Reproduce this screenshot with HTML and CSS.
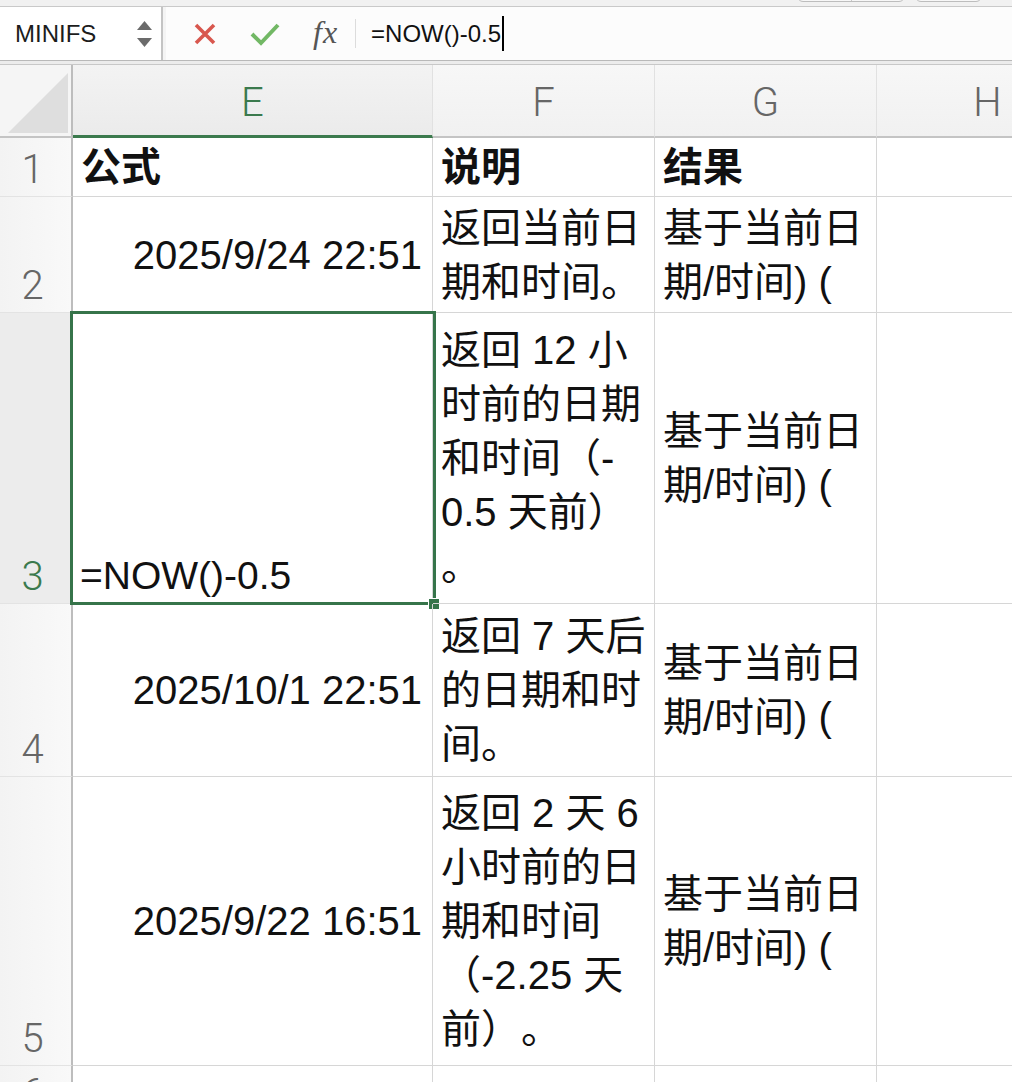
FILE: index.html
```html
<!DOCTYPE html>
<html lang="zh-CN">
<head>
<meta charset="utf-8">
<title>NOW</title>
<link rel="stylesheet" href="styles.css">
</head>
<body>
<div class="app">
  <div class="topstrip">
    <div class="tbtn tbtn-split"><span class="tbtn-half"></span><span class="tbtn-half"></span></div>
    <div class="tbtn tbtn-single"></div>
  </div>
  <div class="fbar">
    <div class="namebox">
      <span class="namebox-text">MINIFS</span>
      <div class="spin">
        <svg width="15" height="26" viewBox="0 0 15 26"><polygon points="7.5,0 15,9 0,9" fill="#6b6b6b"/><polygon points="0,17 15,17 7.5,26" fill="#6b6b6b"/></svg>
      </div>
    </div>
    <div class="fgap"></div>
    <div class="formula">
      <svg class="ficon ficon-x" width="24" height="24" viewBox="0 0 24 24"><path d="M3 3 L21 21 M21 3 L3 21" stroke="#d8574e" stroke-width="3.6" stroke-linecap="butt" fill="none"/></svg>
      <svg class="ficon ficon-ok" width="30" height="24" viewBox="0 0 30 24"><path d="M2 12 L11 21 L28 3" stroke="#72b865" stroke-width="4" fill="none"/></svg>
      <span class="fx">fx</span>
      <span class="fsep"></span>
      <span class="ftext">=NOW()-0.5</span><span class="caret"></span>
    </div>
  </div>
  <div class="fbar-bottom"></div>
  <div class="sheet">
    <div class="corner"><svg width="73" height="73" viewBox="0 0 73 73"><polygon points="8,68 68,8 68,68" fill="#dedede"/></svg></div>
    <div class="colhead colhead-active">E</div>
    <div class="colhead">F</div>
    <div class="colhead">G</div>
    <div class="colhead">H</div>

    <div class="rowhead">1</div>
    <div class="cell cell-bold">公式</div>
    <div class="cell cell-bold">说明</div>
    <div class="cell cell-bold">结果</div>
    <div class="cell"></div>

    <div class="rowhead">2</div>
    <div class="cell cell-num">2025/9/24 22:51</div>
    <div class="cell cell-text">返回当前日<br>期和时间。</div>
    <div class="cell cell-text">基于当前日<br>期/时间) (</div>
    <div class="cell"></div>

    <div class="rowhead rowhead-active">3</div>
    <div class="cell cell-edit">=NOW()-0.5<div class="selection"><span class="handle"></span></div></div>
    <div class="cell cell-text">返回 12 小<br>时前的日期<br>和时间（-<br>0.5 天前）<br>。</div>
    <div class="cell cell-text">基于当前日<br>期/时间) (</div>
    <div class="cell"></div>

    <div class="rowhead">4</div>
    <div class="cell cell-num">2025/10/1 22:51</div>
    <div class="cell cell-text">返回 7 天后<br>的日期和时<br>间。</div>
    <div class="cell cell-text">基于当前日<br>期/时间) (</div>
    <div class="cell"></div>

    <div class="rowhead">5</div>
    <div class="cell cell-num">2025/9/22 16:51</div>
    <div class="cell cell-text">返回 2 天 6<br>小时前的日<br>期和时间<br>（-2.25 天<br>前）。</div>
    <div class="cell cell-text">基于当前日<br>期/时间) (</div>
    <div class="cell"></div>

    <div class="rowhead rowhead-cut">6</div>
    <div class="cell"></div>
    <div class="cell"></div>
    <div class="cell"></div>
    <div class="cell"></div>
  </div>
</div>
</body>
</html>
```
FILE: styles.css
```css
* { box-sizing: border-box; }
html, body { margin: 0; padding: 0; }
body {
  width: 1012px;
  height: 1082px;
  overflow: hidden;
  background: #ffffff;
  font-family: "Liberation Sans", "Noto Sans CJK SC", sans-serif;
  color: #111;
  text-spacing-trim: space-all;
}
.app { width: 1012px; height: 1082px; overflow: hidden; }

.topstrip {
  height: 7px;
  background: #f1f1f1;
  border-bottom: 1px solid #c9c9c9;
  display: flex;
  justify-content: flex-end;
  align-items: flex-end;
  gap: 10px;
  padding: 0 30px 4px 0;
  overflow: hidden;
}
.tbtn {
  height: 20px;
  border: 1px solid #bdbdbd;
  border-radius: 6px;
  background: #f7f7f7;
  flex: none;
}
.tbtn-split { width: 108px; display: flex; }
.tbtn-half { flex: 1; }
.tbtn-half + .tbtn-half { border-left: 1px solid #c8c8c8; }
.tbtn-single { width: 67px; }

.fbar {
  height: 53px;
  display: flex;
  background: #fcfcfc;
}
.namebox {
  width: 163px;
  flex: none;
  background: #ffffff;
  border-right: 2px solid #c4c4c4;
  display: flex;
  align-items: center;
  padding: 0 8px 0 15px;
}
.namebox-text {
  font-size: 24px;
  color: #1c1c1c;
  flex: 1;
}
.spin { display: flex; align-items: center; margin-right: 1px; }
.fgap { width: 3px; flex: none; background: #f4f4f4; }
.formula {
  flex: 1;
  display: flex;
  align-items: center;
  padding-left: 27px;
}
.ficon { flex: none; display: block; }
.ficon-x { margin-right: 33px; }
.ficon-ok { margin-right: 33px; }
.fx {
  font-family: "Liberation Serif", "DejaVu Serif", serif;
  font-style: italic;
  font-size: 32px;
  color: #555;
  margin-right: 17px;
  line-height: 1;
  padding-bottom: 3px;
  letter-spacing: 1px;
}
.fsep { width: 1px; height: 29px; background: #dcdcdc; margin-right: 15px; }
.ftext { font-size: 24px; color: #111; }
.caret { width: 2px; height: 35px; background: #000; margin-left: 1px; }

.fbar-bottom {
  height: 5px;
  border-top: 1px solid #b9b9b9;
  border-bottom: 1px solid #c8c8c8;
  background: #ececec;
}

.sheet {
  display: grid;
  grid-template-columns: 73px 360px 222px 222px 222px;
  grid-template-rows: 73px 59px 116px 291px 173px 289px 55px;
  width: 1099px;
}
.corner {
  background: #f5f5f5;
  border-right: 2px solid #bdbdbd;
  border-bottom: 2px solid #c4c4c4;
  overflow: hidden;
}
.corner svg { display: block; }
.colhead {
  background: linear-gradient(#f7f7f7, #f1f1f1);
  border-right: 1px solid #e1e1e1;
  border-bottom: 2px solid #c4c4c4;
  display: flex;
  align-items: center;
  justify-content: center;
  padding-top: 4px;
  font-family: Roboto, "Liberation Sans", sans-serif;
  font-weight: 300;
  font-size: 40px;
  color: #666;
}
.colhead-active {
  color: #3b7a4d;
  border-bottom: 3px solid #3b7a4d;
  background: linear-gradient(#f3f3f3, #ebebeb);
}
.rowhead {
  background: linear-gradient(90deg, #f3f3f3, #f9f9f9);
  border-right: 2px solid #bdbdbd;
  border-bottom: 1px solid #e3e3e3;
  display: flex;
  align-items: flex-end;
  justify-content: center;
  padding: 0 6px 6px 0;
  font-family: Roboto, "Liberation Sans", sans-serif;
  font-weight: 300;
  font-size: 40px;
  line-height: 1;
  color: #666;
}
.rowhead-active {
  background: #ececec;
  color: #3b7a4d;
}
.cell {
  position: relative;
  border-right: 1px solid #d6d6d6;
  border-bottom: 1px solid #d6d6d6;
  font-size: 40px;
  line-height: 54px;
  color: #111;
  display: flex;
  flex-direction: column;
  justify-content: center;
  white-space: nowrap;
}
.cell-bold { font-weight: bold; padding-left: 8px; }
.cell-num { align-items: flex-end; padding-right: 10px; }
.cell-text { padding-left: 8px; }
.cell-edit { justify-content: flex-end; padding: 0 0 8px 7px; line-height: 1; font-size: 39px; }
.selection {
  position: absolute;
  left: -3px;
  top: -2px;
  width: 366px;
  height: 294px;
  border: 3px solid #36744a;
  pointer-events: none;
}
.handle {
  position: absolute;
  right: -6px;
  bottom: -7px;
  width: 10px;
  height: 10px;
  background: #36744a;
  box-shadow: 0 0 0 1px #fff;
}
```
